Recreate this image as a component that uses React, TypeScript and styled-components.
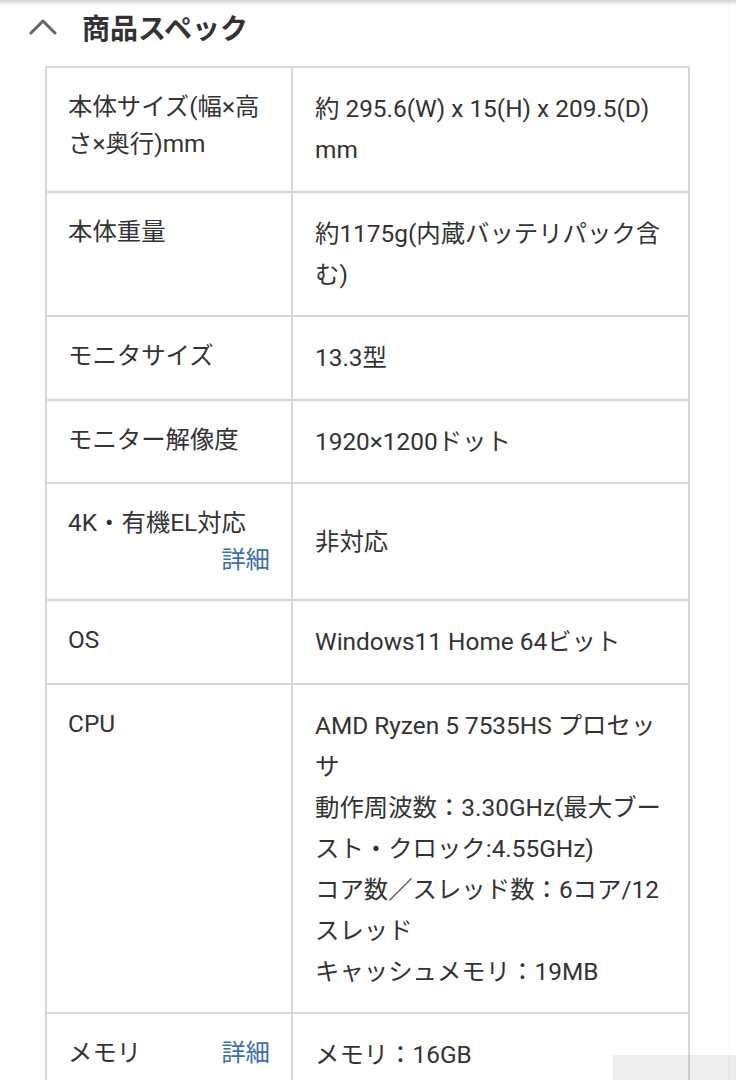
import React from "react";
import styled, { createGlobalStyle } from "styled-components";

const Global = createGlobalStyle`
  html, body { margin: 0; padding: 0; background: #ffffff; }
  body {
    font-family: Roboto, "Noto Sans CJK JP", "Noto Sans", sans-serif;
    color: #333333;
  }
`;

const Page = styled.div`
  position: relative;
  width: 736px;
  height: 1080px;
  overflow: hidden;
  background: #ffffff;
`;

const TopShade = styled.div`
  height: 6px;
  background: linear-gradient(to bottom, #d2d2d2 0%, #ececec 50%, #ffffff 100%);
`;

const Header = styled.div`
  display: flex;
  align-items: center;
  height: 42px;
  padding-left: 29px;
  gap: 25px;
`;

const Title = styled.h2`
  margin: 0;
  font-family: "Noto Sans CJK JP", sans-serif;
  font-weight: 700;
  font-size: 28px;
  line-height: 1;
  color: #333333;
`;

const SpecTable = styled.table`
  margin: 18px 0 0 45px;
  width: 645px;
  table-layout: fixed;
  border-collapse: separate;
  border-spacing: 0;
  border-top: 2px solid #d6d6d6;
  border-left: 2px solid #d6d6d6;
`;

const LabelCol = styled.col`
  width: 246px;
`;

const ValueCol = styled.col`
  width: 397px;
`;

const LabelCell = styled.th`
  box-sizing: border-box;
  padding: 20px 21px 21px 21px;
  text-align: left;
  vertical-align: top;
  font-weight: 400;
  font-size: 24.4px;
  line-height: 37px;
  color: #333333;
  border-right: 2px solid #d6d6d6;
  border-bottom: 2px solid #d6d6d6;
`;

const LabelInner = styled.div`
  display: flex;
  flex-wrap: wrap;
  align-items: baseline;
`;

const DetailLink = styled.a`
  margin-left: auto;
  color: #3d70a8;
  text-decoration: none;
  font-size: 24.4px;
  cursor: pointer;
`;

const ValueCell = styled.td`
  box-sizing: border-box;
  padding: 20px 22px 20.5px 22px;
  vertical-align: middle;
  font-size: 24.4px;
  line-height: 41px;
  color: #333333;
  border-right: 2px solid #d6d6d6;
  border-bottom: 2px solid #d6d6d6;
`;

const BottomBlock = styled.div`
  position: absolute;
  left: 613px;
  top: 1055px;
  right: 0;
  bottom: 0;
  background: rgba(0, 0, 0, 0.065);
  pointer-events: none;
`;

const EdgeLine = styled.div`
  position: absolute;
  top: 0;
  bottom: 0;
  left: 729px;
  width: 1px;
  background: rgba(0, 0, 0, 0.04);
  pointer-events: none;
`;

const Chevron = () => (
  <svg width="28" height="18" viewBox="0 0 28 18" aria-hidden="true">
    <polyline
      points="2,15 14,3 26,15"
      fill="none"
      stroke="#666666"
      strokeWidth="3"
      strokeLinecap="round"
      strokeLinejoin="round"
    />
  </svg>
);

type Row = { label: string; detail?: boolean; value: React.ReactNode };

const rows: Row[] = [
  { label: "本体サイズ(幅×高さ×奥行)mm", value: "約 295.6(W) x 15(H) x 209.5(D) mm" },
  { label: "本体重量", value: "約1175g(内蔵バッテリパック含む)" },
  { label: "モニタサイズ", value: "13.3型" },
  { label: "モニター解像度", value: "1920×1200ドット" },
  { label: "4K・有機EL対応", detail: true, value: "非対応" },
  { label: "OS", value: "Windows11 Home 64ビット" },
  {
    label: "CPU",
    value: (
      <>
        AMD Ryzen 5 7535HS プロセッサ
        <br />
        動作周波数：3.30GHz(最大ブースト・クロック:4.55GHz)
        <br />
        コア数／スレッド数：6コア/12スレッド
        <br />
        キャッシュメモリ：19MB
      </>
    ),
  },
  { label: "メモリ", detail: true, value: "メモリ：16GB" },
];

export default function App() {
  return (
    <Page>
      <Global />
      <TopShade />
      <Header>
        <Chevron />
        <Title>商品スペック</Title>
      </Header>
      <SpecTable>
        <colgroup>
          <LabelCol />
          <ValueCol />
        </colgroup>
        <tbody>
          {rows.map((r) => (
            <tr key={r.label}>
              <LabelCell scope="row">
                <LabelInner>
                  <span>{r.label}</span>
                  {r.detail && <DetailLink>詳細</DetailLink>}
                </LabelInner>
              </LabelCell>
              <ValueCell>{r.value}</ValueCell>
            </tr>
          ))}
        </tbody>
      </SpecTable>
      <BottomBlock />
      <EdgeLine />
    </Page>
  );
}
